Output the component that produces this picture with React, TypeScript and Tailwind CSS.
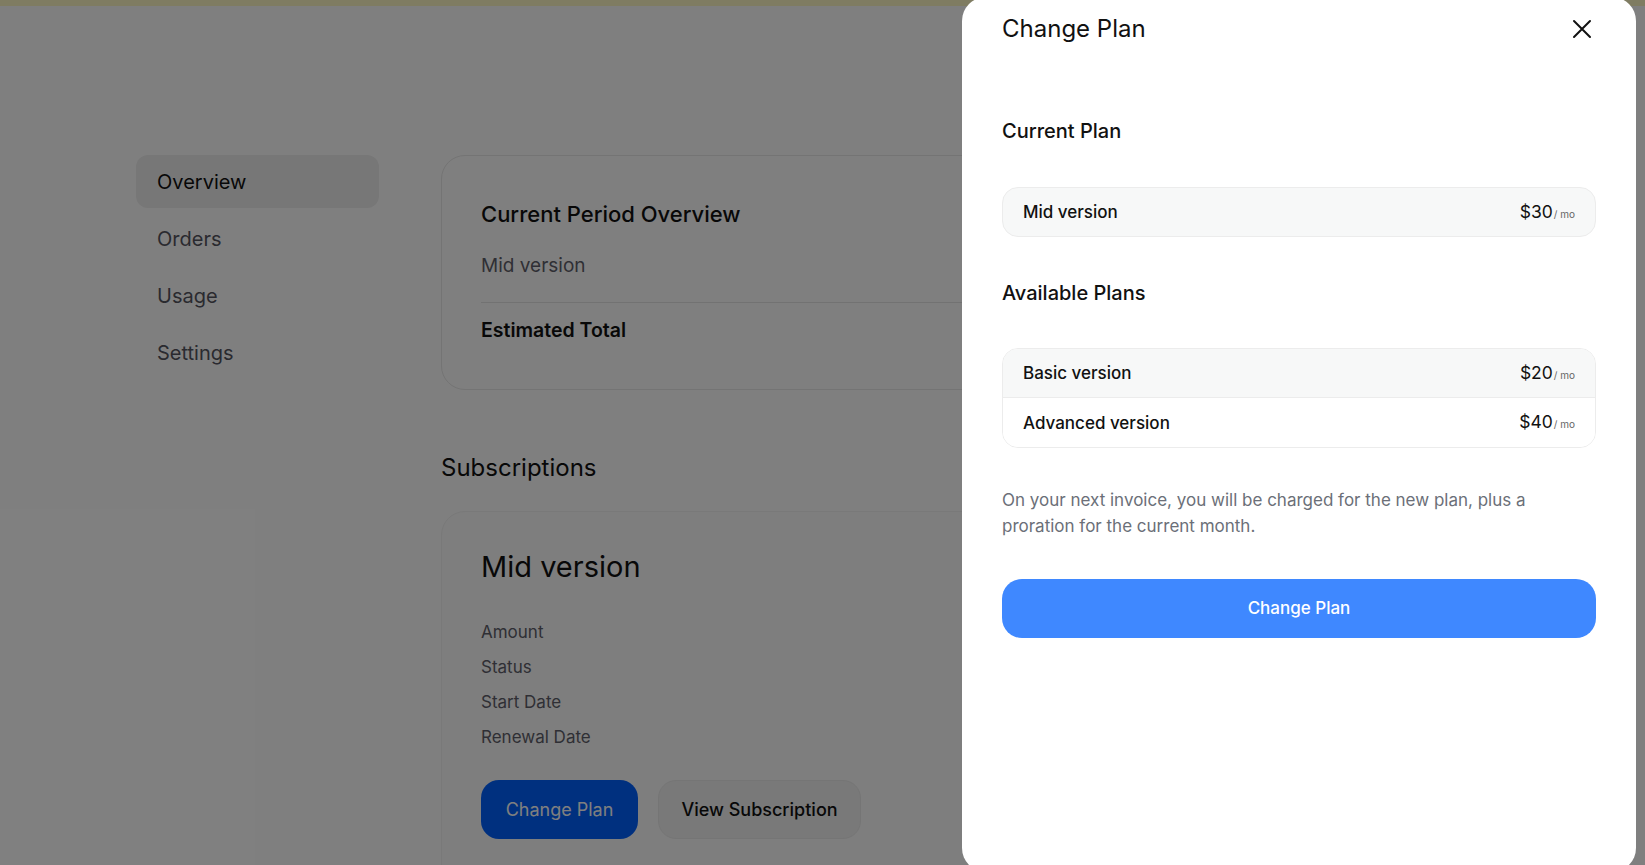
import { X } from 'lucide-react';

const plans = [
    { name: 'Basic version', price: 20 },
    { name: 'Advanced version', price: 40 },
];

const navItems = ['Overview', 'Orders', 'Usage', 'Settings'];

const Price: React.FC<{ value: number }> = ({ value }) => (
    <span className="flex items-baseline text-[#111]">
        <span className="text-[17.5px]">${value}</span>
        <span className="ml-[1px] text-[10px] text-[#666]">/ mo</span>
    </span>
);

const ChangePlanPanel: React.FC = () => (
    <div className="absolute right-[9px] top-[-3px] h-[875px] w-[674px] rounded-3xl bg-white px-[40px] pt-[16px]">
        <div className="flex items-center justify-between">
            <h2 className="text-[24px] leading-[32px] text-[#111]">Change Plan</h2>
            <button className="mr-[2px] flex h-[24px] w-[24px] items-center justify-center text-[#111]">
                <svg width="20" height="20" viewBox="0 0 20 20" fill="none" stroke="currentColor" strokeWidth="2" strokeLinecap="round">
                    <path d="M2 2l16 16M18 2L2 18" />
                </svg>
            </button>
        </div>

        <h3 className="mt-[72px] text-[20px] font-medium leading-[28px] text-[#111]">Current Plan</h3>
        <div className="mt-[42px] flex h-[50px] items-center justify-between rounded-2xl border border-[#ececec] bg-[#f7f8f8] px-[20px]">
            <span className="pt-[2px] text-[17px] font-medium text-[#111]">Mid version</span>
            <Price value={30} />
        </div>

        <h3 className="mt-[42px] text-[20px] font-medium leading-[28px] text-[#111]">Available Plans</h3>
        <div className="mt-[41px] overflow-hidden rounded-2xl border border-[#ececec]">
            {plans.map((p, i) => (
                <div
                    key={p.name}
                    className={
                        i === 0
                            ? 'flex h-[49px] items-center justify-between border-b border-[#ececec] bg-[#f7f8f8] px-[20px]'
                            : 'flex h-[49px] items-center justify-between bg-white px-[20px]'
                    }
                >
                    <span className="pt-[2px] text-[17px] font-medium text-[#111]">{p.name}</span>
                    <Price value={p.price} />
                </div>
            ))}
        </div>

        <p className="mt-[39px] w-[560px] text-[17px] leading-[26px] text-[#6b6f78]">
            On your next invoice, you will be charged for the new plan, plus a proration for the current month.
        </p>

        <button className="mt-[40px] flex h-[59px] w-full items-center justify-center rounded-[20px] bg-[#3f88ff] text-[17px] font-medium text-white">
            Change Plan
        </button>
    </div>
);

export default function App() {
    return (
        <div className="relative h-[865px] w-full overflow-hidden bg-white font-['Inter',sans-serif]">
            <div className="h-[6px] bg-[#fff8c4]" />

            <div className="flex gap-[62px] pl-[136px] pt-[149px]">
                <nav className="flex w-[243px] flex-col gap-[4px]">
                    {navItems.map((item, i) => (
                        <div
                            key={item}
                            className={
                                i === 0
                                    ? 'flex h-[53px] items-center rounded-xl bg-[#efefef] px-[21px] text-[20px] text-[#111]'
                                    : 'flex h-[53px] items-center rounded-xl px-[21px] text-[20px] text-[#55555f]'
                            }
                        >
                            {item}
                        </div>
                    ))}
                </nav>

                <main className="w-[900px]">
                    <section className="rounded-3xl border border-[#e8e8e8] pb-[47px] pl-[39px] pt-[44px]">
                        <h2 className="text-[22px] font-medium leading-[28px] text-[#111]">Current Period Overview</h2>
                        <p className="mt-[26px] text-[19px] leading-[24px] text-[#5f5f6a]">Mid version</p>
                        <div className="mt-[24px] border-t border-[#e5e5e5] pt-[15px]">
                            <p className="text-[19.5px] font-semibold leading-[24px] text-[#111]">Estimated Total</p>
                        </div>
                    </section>

                    <h2 className="mt-[62px] text-[24px] leading-[32px] text-[#111]">Subscriptions</h2>

                    <section className="mt-[27px] h-[400px] rounded-3xl border border-[#f2f2f2] bg-[#fcfcfc] pl-[39px] pt-[37px]">
                        <h3 className="text-[29px] leading-[36px] text-[#111]">Mid version</h3>
                        <div className="mt-[35px] flex flex-col gap-[11px] text-[17px] leading-[24px] text-[#5f5f6a]">
                            <span>Amount</span>
                            <span>Status</span>
                            <span>Start Date</span>
                            <span>Renewal Date</span>
                        </div>
                        <div className="mt-[31px] flex gap-[20px]">
                            <button className="h-[59px] w-[157px] rounded-[18px] bg-[#0060ff] text-[18px] text-white">Change Plan</button>
                            <button className="h-[59px] w-[203px] rounded-[18px] border border-[#ebebeb] bg-[#f2f2f2] text-[18px] font-medium text-[#111]">
                                View Subscription
                            </button>
                        </div>
                    </section>
                </main>
            </div>

            <div className="absolute inset-0 bg-black/50" />
            <ChangePlanPanel />
        </div>
    );
}
